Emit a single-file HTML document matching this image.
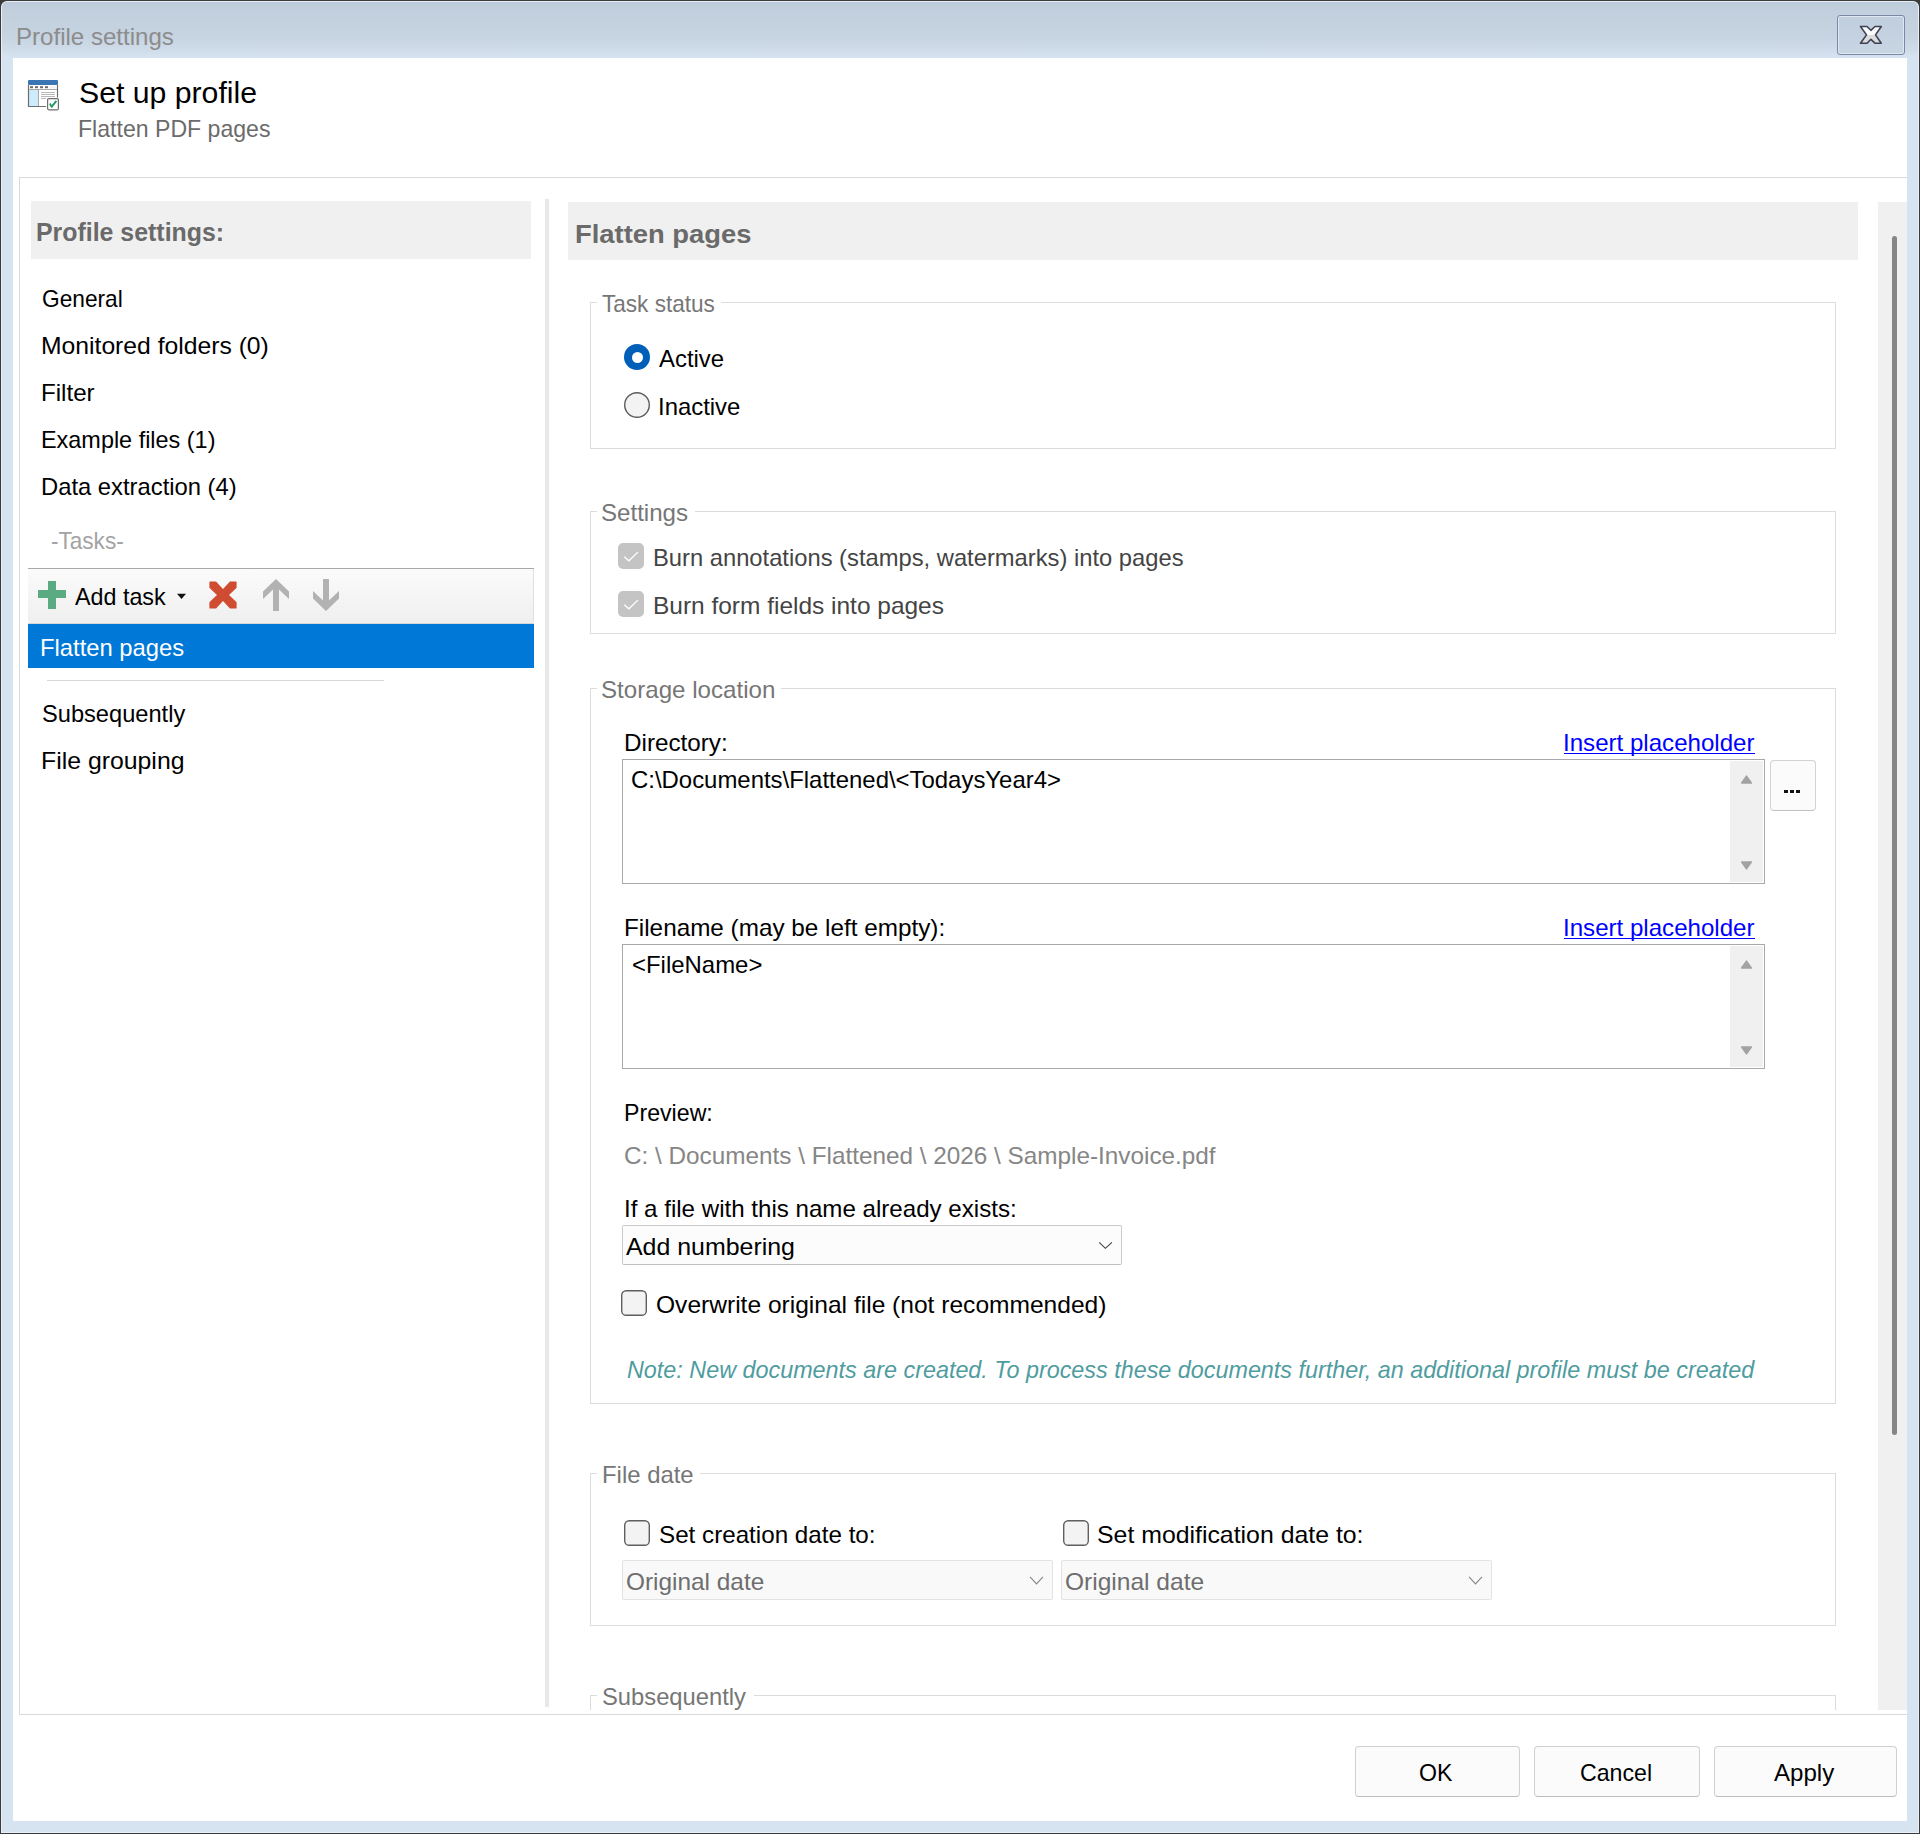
<!DOCTYPE html>
<html><head><meta charset="utf-8"><title>Profile settings</title>
<style>
html,body{margin:0;padding:0;}
body{width:1920px;height:1834px;position:relative;overflow:hidden;background:#3b3b3b;font-family:"Liberation Sans",sans-serif;}
.a{position:absolute;box-sizing:border-box;}
.t{position:absolute;white-space:nowrap;transform-origin:0 0;}
</style></head><body>
<!-- window frame -->
<div class="a" style="left:0;top:0;width:1920px;height:1834px;background:#3b3b3b;"></div>
<div class="a" style="left:1px;top:1px;width:1918px;height:1832px;border-radius:6px 6px 0 0;background:#eaf0f8;"></div>
<div class="a" style="left:2px;top:2px;width:1916px;height:1830px;border-radius:5px 5px 0 0;background:linear-gradient(to bottom,#bccbdb 0px,#c2cfdd 10px,#c6d3e0 34px,#d0dcea 48px,#d6e3f1 55px,#d6e3f1 100%);"></div>
<!-- close button -->
<div class="a" style="left:1837px;top:15px;width:68px;height:40px;border:1px solid #7a88a6;border-radius:3px;background:linear-gradient(#c0cedd,#c8d5e3);box-shadow:inset 0 0 0 1px rgba(230,238,246,0.8);"></div>
<svg class="a" style="left:1858px;top:24px" width="26" height="22" viewBox="0 0 26 22">
<defs><linearGradient id="xg" x1="0" y1="0" x2="0" y2="1"><stop offset="0.5" stop-color="#fbfbfb"/><stop offset="0.5" stop-color="#dcdcdc"/></linearGradient></defs>
<path d="M2.5 2.5 H9 L12.9 6.3 L17 2.5 H23.3 L17.5 10.9 L23.3 19.2 H17 L12.9 15.3 L9 19.2 H2.5 L8.5 10.9 Z" fill="url(#xg)" stroke="#3d4253" stroke-width="1.6" stroke-linejoin="round"/>
</svg>
<!-- client -->
<div class="a" style="left:13px;top:58px;width:1894px;height:1763px;background:#fff;"></div>
<!-- header icon -->
<svg class="a" style="left:27px;top:79px" width="34" height="34" viewBox="0 0 34 34">
<rect x="1.5" y="1.5" width="29" height="26" rx="1" fill="#fff"/>
<rect x="1" y="1" width="30" height="5" rx="1" fill="#3a76b4"/>
<rect x="2" y="11" width="9" height="16" fill="#cdebfb"/>
<path d="M1.5 6 V27.5 H19" fill="none" stroke="#6e6e6e" stroke-width="1.2"/>
<path d="M30.5 6 V18.5" fill="none" stroke="#6e6e6e" stroke-width="1.2"/>
<line x1="2" y1="10.5" x2="30" y2="10.5" stroke="#a8a8a8" stroke-width="1"/>
<line x1="11.5" y1="11" x2="11.5" y2="27" stroke="#a8a8a8" stroke-width="1"/>
<rect x="3" y="7.2" width="3" height="2" fill="#6e6e6e"/><rect x="8" y="7.2" width="3" height="2" fill="#6e6e6e"/><rect x="13" y="7.2" width="3" height="2" fill="#6e6e6e"/><rect x="18" y="7.2" width="3" height="2" fill="#6e6e6e"/>
<g stroke="#b0b0b0" stroke-width="0.9"><line x1="14" y1="13.5" x2="28" y2="13.5"/><line x1="14" y1="15.5" x2="28" y2="15.5"/><line x1="14" y1="17.5" x2="28" y2="17.5"/><line x1="14" y1="19.5" x2="19" y2="19.5"/></g>
<rect x="20.6" y="19.6" width="10.8" height="11.2" rx="1.2" fill="#fff" stroke="#6e6e6e" stroke-width="1.2"/>
<rect x="22" y="7" width="6.7" height="2.5" fill="#f3f3f3"/><path d="M22.9 24.5 L24.6 27.9 L29.4 21.9" fill="none" stroke="#1f9a64" stroke-width="1.8" stroke-linejoin="round"/>
</svg>
<!-- main box -->
<div class="a" style="left:19px;top:177px;width:1888px;height:1538px;border:1px solid #dadada;border-right:none;"></div>
<!-- left header -->
<div class="a" style="left:31px;top:201px;width:500px;height:58px;background:#f0f0f0;"></div>
<!-- left divider -->
<div class="a" style="left:545px;top:199px;width:4px;height:1508px;background:#e8e8e8;"></div>
<!-- toolbar -->
<div class="a" style="left:28px;top:568px;width:506px;height:1px;background:#a9a9a9;"></div>
<div class="a" style="left:28px;top:569px;width:506px;height:54px;background:linear-gradient(#fbfbfb,#efefef);border-right:1px solid #e0e0e0;border-radius:0 0 3px 3px;"></div>
<div class="a" style="left:28px;top:623px;width:506px;height:1px;background:#d6d6d6;"></div>
<!-- plus -->
<div class="a" style="left:38px;top:590px;width:28px;height:8px;background:#5aab82;"></div>
<div class="a" style="left:48px;top:581px;width:8px;height:28px;background:#5aab82;"></div>
<!-- dropdown tri -->
<svg class="a" style="left:176px;top:593px" width="11" height="7" viewBox="0 0 11 7"><path d="M1 0.8 H10 L5.5 6 Z" fill="#111"/></svg>
<!-- red x -->
<svg class="a" style="left:209px;top:581px" width="28" height="28" viewBox="0 0 28 28"><path d="M1 1 H6.6 L14 8.9 L21.4 1 H27 V6.6 L19.1 14 L27 21.4 V27 H21.4 L14 19.1 L6.6 27 H1 V21.4 L8.9 14 L1 6.6 Z" fill="#cf4b31" stroke="#cf4b31" stroke-width="1.2" stroke-linejoin="round"/></svg>
<!-- up arrow -->
<svg class="a" style="left:262px;top:578px" width="28" height="34" viewBox="0 0 28 34"><path d="M14 1 L27 13.5 V21 L17 11.5 V33 H11 V11.5 L1 21 V13.5 Z" fill="#b2b2b2"/></svg>
<!-- down arrow -->
<svg class="a" style="left:312px;top:578px" width="28" height="34" viewBox="0 0 28 34"><path d="M14 33 L27 20.5 V13 L17 22.5 V1 H11 V22.5 L1 13 V20.5 Z" fill="#b2b2b2"/></svg>
<!-- selected row -->
<div class="a" style="left:28px;top:624px;width:506px;height:44px;background:#0078d7;"></div>
<div class="a" style="left:47px;top:680px;width:337px;height:1px;background:#d8d8d8;"></div>
<!-- right header -->
<div class="a" style="left:568px;top:202px;width:1290px;height:58px;background:#f0f0f0;"></div>
<!-- scrollbar -->
<div class="a" style="left:1878px;top:202px;width:29px;height:1508px;background:#f0f0f0;"></div>
<div class="a" style="left:1892px;top:236px;width:5px;height:1199px;background:#868686;border-radius:2.5px;"></div>
<!-- groupboxes -->
<div class="a" style="left:590px;top:302px;width:1246px;height:147px;border:1px solid #dcdcdc;"></div>
<div class="a" style="left:597px;top:295px;width:124px;height:14px;background:#fff;"></div>
<div class="a" style="left:590px;top:511px;width:1246px;height:123px;border:1px solid #dcdcdc;"></div>
<div class="a" style="left:597px;top:504px;width:98px;height:14px;background:#fff;"></div>
<div class="a" style="left:590px;top:688px;width:1246px;height:716px;border:1px solid #dcdcdc;"></div>
<div class="a" style="left:597px;top:681px;width:184px;height:14px;background:#fff;"></div>
<div class="a" style="left:590px;top:1473px;width:1246px;height:153px;border:1px solid #dcdcdc;"></div>
<div class="a" style="left:597px;top:1466px;width:103px;height:14px;background:#fff;"></div>
<div class="a" style="left:590px;top:1695px;width:1246px;height:60px;border:1px solid #dcdcdc;clip-path:inset(0 0 45px 0);"></div>
<div class="a" style="left:597px;top:1688px;width:157px;height:14px;background:#fff;"></div>
<!-- radios -->
<div class="a" style="left:624px;top:344px;width:26px;height:26px;border-radius:50%;background:#005fb8;"></div>
<div class="a" style="left:631.5px;top:351.5px;width:11px;height:11px;border-radius:50%;background:#fff;"></div>
<svg class="a" style="left:624px;top:392px" width="26" height="26" viewBox="0 0 26 26"><circle cx="13" cy="13" r="12.3" fill="#f3f3f3" stroke="#5c5c5c" stroke-width="1.4"/></svg>
<!-- disabled checked checkboxes -->
<div class="a" style="left:618px;top:543px;width:26px;height:26px;border-radius:5px;background:#c4c4c4;"></div>
<svg class="a" style="left:618px;top:543px" width="26" height="26" viewBox="0 0 26 26"><path d="M6.3 13.7 L10.9 17.8 L19.9 9.1" fill="none" stroke="#fff" stroke-width="1.3"/></svg>
<div class="a" style="left:618px;top:591px;width:26px;height:26px;border-radius:5px;background:#c4c4c4;"></div>
<svg class="a" style="left:618px;top:591px" width="26" height="26" viewBox="0 0 26 26"><path d="M6.3 13.7 L10.9 17.8 L19.9 9.1" fill="none" stroke="#fff" stroke-width="1.3"/></svg>
<!-- directory textbox -->
<div class="a" style="left:622px;top:759px;width:1143px;height:125px;border:1px solid #a7a9ad;background:#fff;"></div>
<div class="a" style="left:1730px;top:761px;width:33px;height:121px;background:#f0f0f0;"></div>
<svg class="a" style="left:1740px;top:774px" width="13" height="11" viewBox="0 0 13 11"><path d="M6.5 2.2 L11.3 9 H1.7 Z" fill="#a3a3a3" stroke="#a3a3a3" stroke-width="1.6" stroke-linejoin="round"/></svg>
<svg class="a" style="left:1740px;top:860px" width="13" height="11" viewBox="0 0 13 11"><path d="M6.5 8.8 L11.3 2 H1.7 Z" fill="#a3a3a3" stroke="#a3a3a3" stroke-width="1.6" stroke-linejoin="round"/></svg>
<!-- browse button -->
<div class="a" style="left:1770px;top:760px;width:46px;height:51px;border:1px solid #d3d3d3;border-bottom-color:#c2c2c2;border-radius:4px;background:#fbfbfb;"></div>
<div class="a" style="left:1784px;top:790px;width:4px;height:3px;background:#111;"></div>
<div class="a" style="left:1790px;top:790px;width:4px;height:3px;background:#111;"></div>
<div class="a" style="left:1796px;top:790px;width:4px;height:3px;background:#111;"></div>
<!-- filename textbox -->
<div class="a" style="left:622px;top:944px;width:1143px;height:125px;border:1px solid #a7a9ad;background:#fff;"></div>
<div class="a" style="left:1730px;top:946px;width:33px;height:121px;background:#f0f0f0;"></div>
<svg class="a" style="left:1740px;top:959px" width="13" height="11" viewBox="0 0 13 11"><path d="M6.5 2.2 L11.3 9 H1.7 Z" fill="#a3a3a3" stroke="#a3a3a3" stroke-width="1.6" stroke-linejoin="round"/></svg>
<svg class="a" style="left:1740px;top:1045px" width="13" height="11" viewBox="0 0 13 11"><path d="M6.5 8.8 L11.3 2 H1.7 Z" fill="#a3a3a3" stroke="#a3a3a3" stroke-width="1.6" stroke-linejoin="round"/></svg>
<!-- combo add numbering -->
<div class="a" style="left:622px;top:1225px;width:500px;height:40px;border:1px solid #cbcbcb;border-bottom-color:#c0c0c0;border-radius:2px;background:#fcfcfc;"></div>
<svg class="a" style="left:1097px;top:1240px" width="16" height="10" viewBox="0 0 16 10"><path d="M2.2 2.3 L8.4 8.3 L14.9 2.3" fill="none" stroke="#404040" stroke-width="1.15"/></svg>
<!-- overwrite checkbox -->
<svg class="a" style="left:621px;top:1290px" width="26" height="26" viewBox="0 0 26 26"><rect x="0.7" y="0.7" width="24.6" height="24.6" rx="4.6" fill="#f3f3f3" stroke="#5f5f5f" stroke-width="1.4"/></svg>
<!-- file date checkboxes -->
<svg class="a" style="left:624px;top:1520px" width="26" height="26" viewBox="0 0 26 26"><rect x="0.7" y="0.7" width="24.6" height="24.6" rx="4.6" fill="#f3f3f3" stroke="#5f5f5f" stroke-width="1.4"/></svg>
<svg class="a" style="left:1063px;top:1520px" width="26" height="26" viewBox="0 0 26 26"><rect x="0.7" y="0.7" width="24.6" height="24.6" rx="4.6" fill="#f3f3f3" stroke="#5f5f5f" stroke-width="1.4"/></svg>
<!-- disabled combos -->
<div class="a" style="left:622px;top:1560px;width:431px;height:40px;border:1px solid #e3e3e3;border-radius:2px;background:#f9f9f9;"></div>
<svg class="a" style="left:1028px;top:1575px" width="16" height="10" viewBox="0 0 16 10"><path d="M2 1.8 L8.5 8.9 L15 1.8" fill="none" stroke="#858585" stroke-width="1.1"/></svg>
<div class="a" style="left:1061px;top:1560px;width:431px;height:40px;border:1px solid #e3e3e3;border-radius:2px;background:#f9f9f9;"></div>
<svg class="a" style="left:1467px;top:1575px" width="16" height="10" viewBox="0 0 16 10"><path d="M2 1.8 L8.5 8.9 L15 1.8" fill="none" stroke="#858585" stroke-width="1.1"/></svg>
<!-- bottom buttons -->
<div class="a" style="left:1355px;top:1746px;width:165px;height:51px;border:1px solid #d0d0d0;border-bottom-color:#bdbdbd;border-radius:4px;background:#fbfbfb;"></div>
<div class="a" style="left:1534px;top:1746px;width:166px;height:51px;border:1px solid #d0d0d0;border-bottom-color:#bdbdbd;border-radius:4px;background:#fbfbfb;"></div>
<div class="a" style="left:1714px;top:1746px;width:183px;height:51px;border:1px solid #d0d0d0;border-bottom-color:#bdbdbd;border-radius:4px;background:#fbfbfb;"></div>

<!-- link underlines -->
<div class="a" style="left:1564px;top:753px;width:191px;height:1px;background:#0000ff;"></div>
<div class="a" style="left:1564px;top:938px;width:191px;height:1px;background:#0000ff;"></div>

<div class="t" style="left:16.49px;top:25px;font:normal 400 24px/1 'Liberation Sans',sans-serif;color:#8c8c8c;transform:scaleX(1.0032);">Profile settings</div>
<div class="t" style="left:78.99px;top:78px;font:normal 400 30px/1 'Liberation Sans',sans-serif;color:#000;transform:scaleX(1.0071);">Set up profile</div>
<div class="t" style="left:78.08px;top:117px;font:normal 400 24px/1 'Liberation Sans',sans-serif;color:#6b6b6b;transform:scaleX(0.9619);">Flatten PDF pages</div>
<div class="t" style="left:35.99px;top:219px;font:normal 700 26px/1 'Liberation Sans',sans-serif;color:#6a6a6a;transform:scaleX(0.9573);">Profile settings:</div>
<div class="t" style="left:41.75px;top:287px;font:normal 400 24px/1 'Liberation Sans',sans-serif;color:#000;transform:scaleX(0.9458);">General</div>
<div class="t" style="left:40.64px;top:334px;font:normal 400 24px/1 'Liberation Sans',sans-serif;color:#000;transform:scaleX(1.0289);">Monitored folders (0)</div>
<div class="t" style="left:40.69px;top:381px;font:normal 400 24px/1 'Liberation Sans',sans-serif;color:#000;transform:scaleX(1.0059);">Filter</div>
<div class="t" style="left:40.75px;top:428px;font:normal 400 24px/1 'Liberation Sans',sans-serif;color:#000;transform:scaleX(0.9760);">Example files (1)</div>
<div class="t" style="left:40.72px;top:475px;font:normal 400 24px/1 'Liberation Sans',sans-serif;color:#000;transform:scaleX(0.9912);">Data extraction (4)</div>
<div class="t" style="left:51.06px;top:529px;font:normal 400 24px/1 'Liberation Sans',sans-serif;color:#a3a3a3;transform:scaleX(0.9400);">-Tasks-</div>
<div class="t" style="left:74.90px;top:585px;font:normal 400 24px/1 'Liberation Sans',sans-serif;color:#000;transform:scaleX(0.9710);">Add task</div>
<div class="t" style="left:40.12px;top:636px;font:normal 400 24px/1 'Liberation Sans',sans-serif;color:#fff;transform:scaleX(0.9909);">Flatten pages</div>
<div class="t" style="left:41.72px;top:702px;font:normal 400 24px/1 'Liberation Sans',sans-serif;color:#000;transform:scaleX(0.9848);">Subsequently</div>
<div class="t" style="left:40.63px;top:749px;font:normal 400 24px/1 'Liberation Sans',sans-serif;color:#000;transform:scaleX(1.0341);">File grouping</div>
<div class="t" style="left:574.89px;top:221px;font:normal 700 26px/1 'Liberation Sans',sans-serif;color:#6a6a6a;transform:scaleX(1.0527);">Flatten pages</div>
<div class="t" style="left:602.30px;top:292px;font:normal 400 24px/1 'Liberation Sans',sans-serif;color:#767676;transform:scaleX(0.9403);">Task status</div>
<div class="t" style="left:601.30px;top:501px;font:normal 400 24px/1 'Liberation Sans',sans-serif;color:#767676;transform:scaleX(1.0035);">Settings</div>
<div class="t" style="left:601.29px;top:678px;font:normal 400 24px/1 'Liberation Sans',sans-serif;color:#767676;transform:scaleX(1.0053);">Storage location</div>
<div class="t" style="left:602.01px;top:1463px;font:normal 400 24px/1 'Liberation Sans',sans-serif;color:#767676;transform:scaleX(0.9955);">File date</div>
<div class="t" style="left:602.01px;top:1685px;font:normal 400 24px/1 'Liberation Sans',sans-serif;color:#767676;transform:scaleX(0.9897);">Subsequently</div>
<div class="t" style="left:659.30px;top:347px;font:normal 400 24px/1 'Liberation Sans',sans-serif;color:#000;transform:scaleX(0.9953);">Active</div>
<div class="t" style="left:658.41px;top:395px;font:normal 400 24px/1 'Liberation Sans',sans-serif;color:#000;transform:scaleX(0.9950);">Inactive</div>
<div class="t" style="left:653.02px;top:546px;font:normal 400 24px/1 'Liberation Sans',sans-serif;color:#444;transform:scaleX(0.9893);">Burn annotations (stamps, watermarks) into pages</div>
<div class="t" style="left:652.96px;top:594px;font:normal 400 24px/1 'Liberation Sans',sans-serif;color:#444;transform:scaleX(1.0191);">Burn form fields into pages</div>
<div class="t" style="left:623.98px;top:731px;font:normal 400 24px/1 'Liberation Sans',sans-serif;color:#000;transform:scaleX(1.0101);">Directory:</div>
<div class="t" style="left:1563.49px;top:731px;font:normal 400 24px/1 'Liberation Sans',sans-serif;color:#0000ff;transform:scaleX(1.0037);">Insert placeholder</div>
<div class="t" style="left:631.00px;top:768px;font:normal 400 24px/1 'Liberation Sans',sans-serif;color:#000;transform:scaleX(0.9967);">C:\Documents\Flattened\&lt;TodaysYear4&gt;</div>
<div class="t" style="left:623.98px;top:916px;font:normal 400 24px/1 'Liberation Sans',sans-serif;color:#000;transform:scaleX(1.0118);">Filename (may be left empty):</div>
<div class="t" style="left:1563.49px;top:916px;font:normal 400 24px/1 'Liberation Sans',sans-serif;color:#0000ff;transform:scaleX(1.0037);">Insert placeholder</div>
<div class="t" style="left:631.90px;top:953px;font:normal 400 24px/1 'Liberation Sans',sans-serif;color:#000;transform:scaleX(0.9977);">&lt;FileName&gt;</div>
<div class="t" style="left:624.07px;top:1101px;font:normal 400 24px/1 'Liberation Sans',sans-serif;color:#000;transform:scaleX(0.9648);">Preview:</div>
<div class="t" style="left:624.49px;top:1144px;font:normal 400 24px/1 'Liberation Sans',sans-serif;color:#868686;transform:scaleX(1.0125);">C: \ Documents \ Flattened \ 2026 \ Sample-Invoice.pdf</div>
<div class="t" style="left:623.99px;top:1197px;font:normal 400 24px/1 'Liberation Sans',sans-serif;color:#000;transform:scaleX(1.0047);">If a file with this name already exists:</div>
<div class="t" style="left:626.00px;top:1235px;font:normal 400 24px/1 'Liberation Sans',sans-serif;color:#000;transform:scaleX(1.0379);">Add numbering</div>
<div class="t" style="left:655.98px;top:1293px;font:normal 400 24px/1 'Liberation Sans',sans-serif;color:#000;transform:scaleX(1.0233);">Overwrite original file (not recommended)</div>
<div class="t" style="left:627.03px;top:1358px;font:italic 400 24px/1 'Liberation Sans',sans-serif;color:#4f9c9f;transform:scaleX(0.9730);">Note: New documents are created. To process these documents further, an additional profile must be created</div>
<div class="t" style="left:658.99px;top:1523px;font:normal 400 24px/1 'Liberation Sans',sans-serif;color:#000;transform:scaleX(1.0080);">Set creation date to:</div>
<div class="t" style="left:1096.96px;top:1523px;font:normal 400 24px/1 'Liberation Sans',sans-serif;color:#000;transform:scaleX(1.0350);">Set modification date to:</div>
<div class="t" style="left:626.48px;top:1570px;font:normal 400 24px/1 'Liberation Sans',sans-serif;color:#6e6e6e;transform:scaleX(1.0157);">Original date</div>
<div class="t" style="left:1064.68px;top:1570px;font:normal 400 24px/1 'Liberation Sans',sans-serif;color:#6e6e6e;transform:scaleX(1.0224);">Original date</div>
<div class="t" style="left:1419.04px;top:1761px;font:normal 400 24px/1 'Liberation Sans',sans-serif;color:#000;transform:scaleX(0.9636);">OK</div>
<div class="t" style="left:1579.83px;top:1761px;font:normal 400 24px/1 'Liberation Sans',sans-serif;color:#000;transform:scaleX(0.9653);">Cancel</div>
<div class="t" style="left:1774.40px;top:1761px;font:normal 400 24px/1 'Liberation Sans',sans-serif;color:#000;transform:scaleX(1.0033);">Apply</div>
</body></html>
